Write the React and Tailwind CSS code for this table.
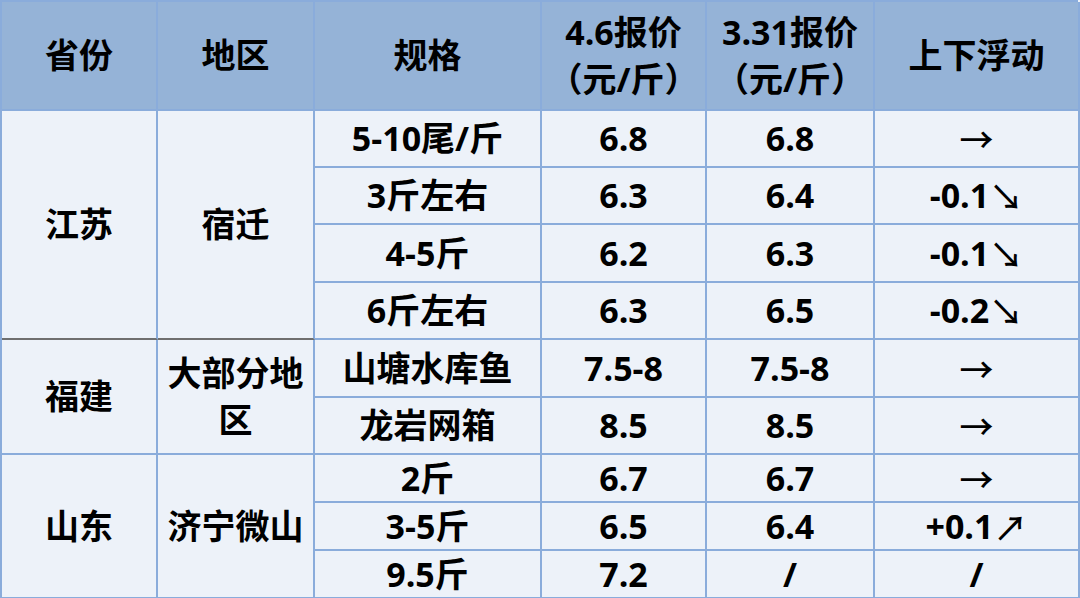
const rows = [
  { spec: '5-10尾/斤', a: '6.8', b: '6.8', diff: '', arrow: '→' },
  { spec: '3斤左右', a: '6.3', b: '6.4', diff: '-0.1', arrow: '↘' },
  { spec: '4-5斤', a: '6.2', b: '6.3', diff: '-0.1', arrow: '↘' },
  { spec: '6斤左右', a: '6.3', b: '6.5', diff: '-0.2', arrow: '↘' },
  { spec: '山塘水库鱼', a: '7.5-8', b: '7.5-8', diff: '', arrow: '→' },
  { spec: '龙岩网箱', a: '8.5', b: '8.5', diff: '', arrow: '→' },
  { spec: '2斤', a: '6.7', b: '6.7', diff: '', arrow: '→' },
  { spec: '3-5斤', a: '6.5', b: '6.4', diff: '+0.1', arrow: '↗' },
  { spec: '9.5斤', a: '7.2', b: '/', diff: '/', arrow: '' },
]

const Cell = ({ className = '', children }) => (
  <div
    className={`flex items-center justify-center text-center border-r-2 border-b-2 border-[#8aacdb] ${className}`}
  >
    {children}
  </div>
)

export default function App() {
  return (
    <div className="w-[1080px] h-[598px] bg-[#eef2f8] font-['Open_Sans','Noto_Sans_CJK_SC',sans-serif] font-bold text-black">
      <div className="grid grid-cols-[156px_157px_227px_165px_168px_205px] grid-rows-[109px_57px_57px_58px_57px_58px_57px_48px_48px_48px] w-[1078px] border-l-2 border-t-2 border-[#8aacdb] bg-[#edf2f9] text-[34px] leading-[47px]">
        <Cell className="bg-[#95b3d7]">省份</Cell>
        <Cell className="bg-[#95b3d7]">地区</Cell>
        <Cell className="bg-[#95b3d7]">规格</Cell>
        <Cell className="bg-[#95b3d7]">
          <span>
            4.6报价
            <br />
            （元/斤）
          </span>
        </Cell>
        <Cell className="bg-[#95b3d7]">
          <span>
            3.31报价
            <br />
            （元/斤）
          </span>
        </Cell>
        <Cell className="bg-[#95b3d7]">上下浮动</Cell>

        <Cell className="row-span-4 col-start-1 row-start-2 border-b-[#6f6f6f]">江苏</Cell>
        <Cell className="row-span-4 col-start-2 row-start-2 border-b-[#6f6f6f]">宿迁</Cell>
        <Cell className="row-span-2 col-start-1 row-start-6">福建</Cell>
        <Cell className="row-span-2 col-start-2 row-start-6 px-2">大部分地区</Cell>
        <Cell className="row-span-3 col-start-1 row-start-8">山东</Cell>
        <Cell className="row-span-3 col-start-2 row-start-8">济宁微山</Cell>

        {rows.map((r, i) => (
          <div key={i} className="contents">
            <Cell className="col-start-3">{r.spec}</Cell>
            <Cell className="col-start-4">{r.a}</Cell>
            <Cell className="col-start-5">{r.b}</Cell>
            <Cell className="col-start-6">
              {r.diff}
              {r.arrow && (
                <span className="font-medium text-[34px] font-['Noto_Sans_CJK_SC',sans-serif]">
                  {r.arrow}
                </span>
              )}
            </Cell>
          </div>
        ))}
      </div>
    </div>
  )
}
